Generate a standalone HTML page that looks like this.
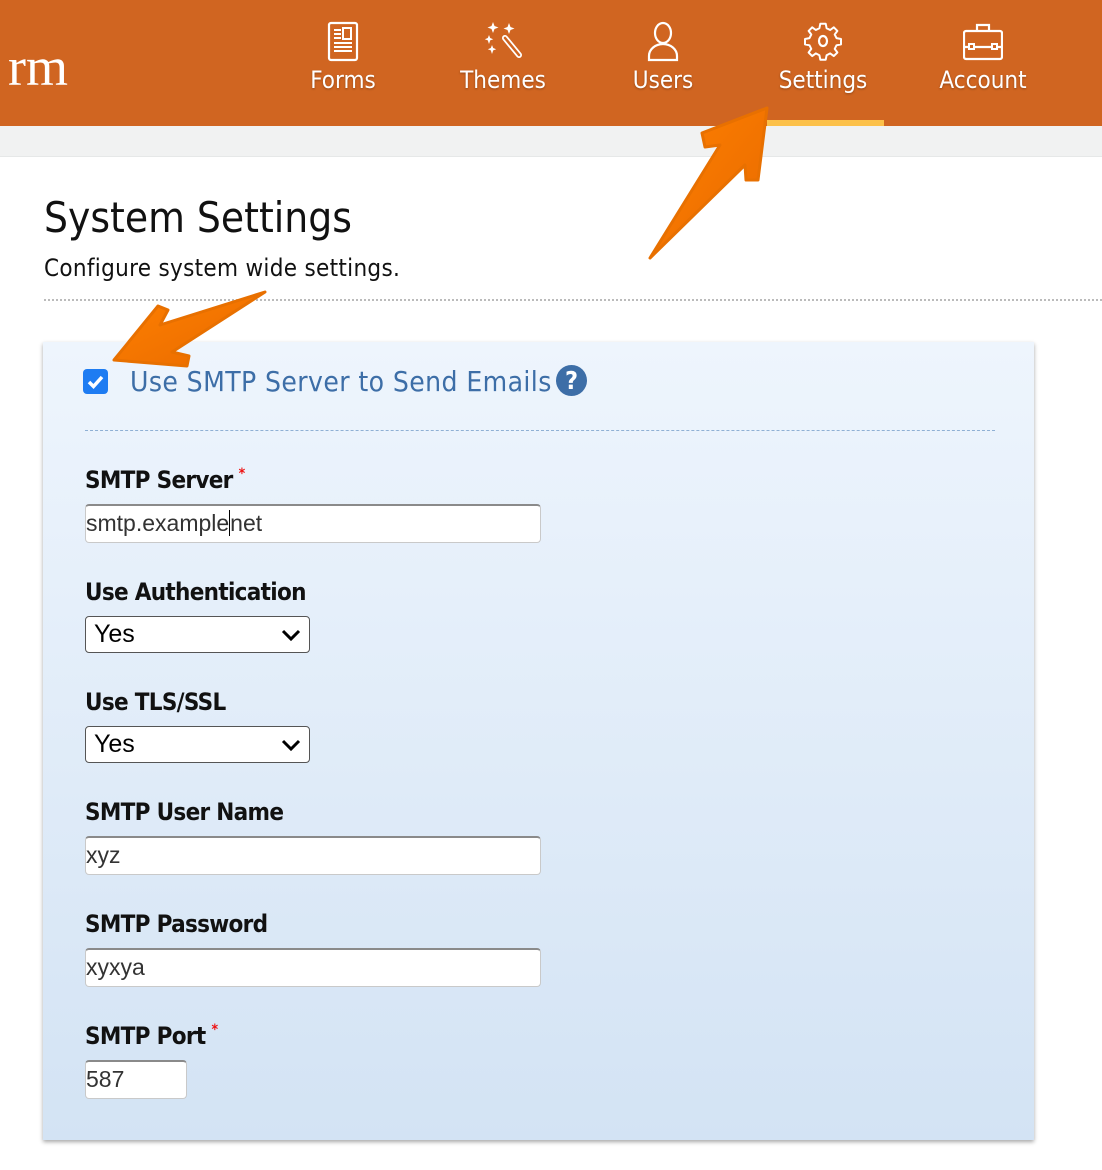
<!DOCTYPE html>
<html><head><meta charset="utf-8"><style>
*{margin:0;padding:0;box-sizing:border-box}
body{width:1102px;height:1170px;background:#fff;position:relative;overflow:hidden;font-family:"DejaVu Sans Condensed","Liberation Sans",sans-serif}
.hdr{position:absolute;left:0;top:0;width:1102px;height:126px;background:#D06521}
.gray{position:absolute;left:0;top:126px;width:1102px;height:31px;background:#f1f2f2;border-bottom:1px solid #e6e8e8}
.logo{position:absolute;left:8px;top:36px;color:#fff;font-family:"Liberation Serif",serif;font-size:54px;letter-spacing:0px}
.nav{position:absolute;top:66px;color:#fff;font-size:24px;text-align:center;width:120px;text-shadow:0 1px 2px rgba(0,0,0,.3)}
.nav svg{position:absolute;left:40px;top:-46px}
.ul{position:absolute;left:767px;top:120px;width:117px;height:6px;background:#fcc14a}
h1{position:absolute;left:44px;top:193px;font-weight:normal;font-size:42px;color:#111}
.sub{position:absolute;left:44px;top:254px;font-size:24px;color:#111;letter-spacing:.3px}
.dots{position:absolute;left:44px;top:299px;width:1058px;border-top:2px dotted #bbb}
.panel{position:absolute;left:43px;top:342px;width:991px;height:798px;background:linear-gradient(#eef5fd,#d3e3f4);box-shadow:0 2px 4px rgba(0,0,0,.35)}
.cb{position:absolute;left:83px;top:369px;width:25px;height:25px;background:#1e7cf2;border-radius:4px}
.ttl{position:absolute;left:130px;top:365px;font-size:28px;color:#3d6ea7;letter-spacing:.4px}
.q{position:absolute;left:556px;top:365px;width:31px;height:31px;border-radius:50%;background:#3d6ea7;color:#fff;font-weight:bold;font-size:25px;text-align:center;line-height:31px}
.dash{position:absolute;left:85px;top:430px;width:910px;border-top:1px dashed #8fb0d4}
.lbl{position:absolute;left:85px;font-size:24px;font-weight:bold;color:#111;letter-spacing:-.7px}
.lbl i{color:#e11;font-style:normal;font-size:14px;vertical-align:top;margin-left:6px}
.inp{position:absolute;left:85px;width:456px;height:39px;background:#fff;border:1px solid #c9c9c9;border-top:2px solid #8a8a8a;border-radius:4px;font-family:"Liberation Sans",sans-serif;font-size:23px;color:#333;line-height:34px}
.sel{position:absolute;left:85px;width:225px;height:37px;background:#fff;border:1.5px solid #555;border-radius:4px;font-family:"Liberation Sans",sans-serif;font-size:25px;color:#000;padding-left:8px;line-height:34px}
.sel svg{position:absolute;right:8px;top:11px}
</style></head><body>
<div class="hdr"></div>
<div class="logo">rm</div>
<div class="nav" style="left:283px"><svg width="40" height="42" viewBox="0 0 40 42"><rect x="6" y="3" width="28" height="37" rx="2" fill="none" stroke="#fff" stroke-width="2.2"/><path d="M11 10h7M11 14h7M11 18h7M11 23h18M11 27h18M11 31h18" stroke="#fff" stroke-width="2"/><rect x="20" y="8" width="8" height="11" fill="none" stroke="#fff" stroke-width="2"/></svg>Forms</div>
<div class="nav" style="left:443px"><svg width="40" height="42" viewBox="0 0 40 42"><path d="M22 18l14 17" stroke="#fff" stroke-width="6" stroke-linecap="round"/><path d="M22 18l14 17" stroke="#D06521" stroke-width="2.5" stroke-linecap="round"/><path d="M10 2l1.5 4 4 1.5-4 1.5L10 13 8.5 9 4.5 7.5l4-1.5zM26 3l1.5 4 4 1.5-4 1.5-1.5 4-1.5-4-4-1.5 4-1.5zM6 15l1.2 3 3 1.2-3 1.2L6 24l-1.2-3.6-3-1.2 3-1.2zM9 25l1.2 3 3 1.2-3 1.2L9 34l-1.2-3.6-3-1.2 3-1.2z" fill="#fff"/></svg>Themes</div>
<div class="nav" style="left:603px"><svg width="40" height="42" viewBox="0 0 40 42"><ellipse cx="20" cy="13" rx="8" ry="10" fill="none" stroke="#fff" stroke-width="2.2"/><path d="M6 40v-4a14 12 0 0 1 28 0v4z" fill="none" stroke="#fff" stroke-width="2.2"/></svg>Users</div>
<div class="nav" style="left:763px"><svg width="40" height="42" viewBox="0 0 40 42"><path d="M17 3h6l1 5 4 2 4-3 4 4-3 4 2 4 5 1v6l-5 1-2 4 3 4-4 4-4-3-4 2-1 5h-6l-1-5-4-2-4 3-4-4 3-4-2-4-5-1v-6l5-1 2-4-3-4 4-4 4 3 4-2z" transform="translate(2 1) scale(.9)" fill="none" stroke="#fff" stroke-width="2.2" stroke-linejoin="round"/><ellipse cx="20" cy="21" rx="4" ry="5" fill="none" stroke="#fff" stroke-width="2.2"/></svg>Settings</div>
<div class="nav" style="left:923px"><svg width="40" height="42" viewBox="0 0 40 42"><rect x="1" y="11" width="38" height="28" rx="2" fill="none" stroke="#fff" stroke-width="2.2"/><path d="M14 11V5h12v6M1 27h38" fill="none" stroke="#fff" stroke-width="2.2"/><rect x="6" y="24" width="5" height="5" fill="#D06521" stroke="#fff" stroke-width="2"/><rect x="29" y="24" width="5" height="5" fill="#D06521" stroke="#fff" stroke-width="2"/></svg>Account</div>
<div class="ul"></div>
<div class="gray"></div>
<h1>System Settings</h1>
<div class="sub">Configure system wide settings.</div>
<div class="dots"></div>
<div class="panel"></div>
<div class="cb"><svg width="25" height="25" viewBox="0 0 25 25"><path d="M6 13l4.5 4.5L19 8" fill="none" stroke="#fff" stroke-width="3.5"/></svg></div>
<div class="ttl">Use SMTP Server to Send Emails</div>
<div class="q">?</div>
<div class="dash"></div>
<div class="lbl" style="top:466px">SMTP Server<i>*</i></div>
<div class="inp" style="top:504px">smtp.example<span style="border-left:1.5px solid #000"></span>net</div>
<div class="lbl" style="top:578px">Use Authentication</div>
<div class="sel" style="top:616px">Yes<svg width="20" height="14" viewBox="0 0 20 14"><path d="M2 3l8 8 8-8" fill="none" stroke="#000" stroke-width="3"/></svg></div>
<div class="lbl" style="top:688px">Use TLS/SSL</div>
<div class="sel" style="top:726px">Yes<svg width="20" height="14" viewBox="0 0 20 14"><path d="M2 3l8 8 8-8" fill="none" stroke="#000" stroke-width="3"/></svg></div>
<div class="lbl" style="top:798px">SMTP User Name</div>
<div class="inp" style="top:836px">xyz</div>
<div class="lbl" style="top:910px">SMTP Password</div>
<div class="inp" style="top:948px">xyxya</div>
<div class="lbl" style="top:1022px">SMTP Port<i>*</i></div>
<div class="inp" style="top:1060px;width:102px">587</div>
<svg style="position:absolute;left:0;top:0" width="1102" height="1170">
<defs><linearGradient id="g" x1="0" y1="0" x2="1" y2="1"><stop offset="0" stop-color="#ff8000"/><stop offset="1" stop-color="#e86a00"/></linearGradient></defs>
<polygon points="767,108 702,133 705,147 720,145 650,258 745,165 746,180 758,180" fill="url(#g)" stroke="#e87000" stroke-width="3" stroke-linejoin="round"/>
<polygon points="114,360 158,306 168,310 160,325 265,292 172,352 189,356 187,366" fill="url(#g)" stroke="#e87000" stroke-width="3" stroke-linejoin="round"/>
</svg>
</body></html>
